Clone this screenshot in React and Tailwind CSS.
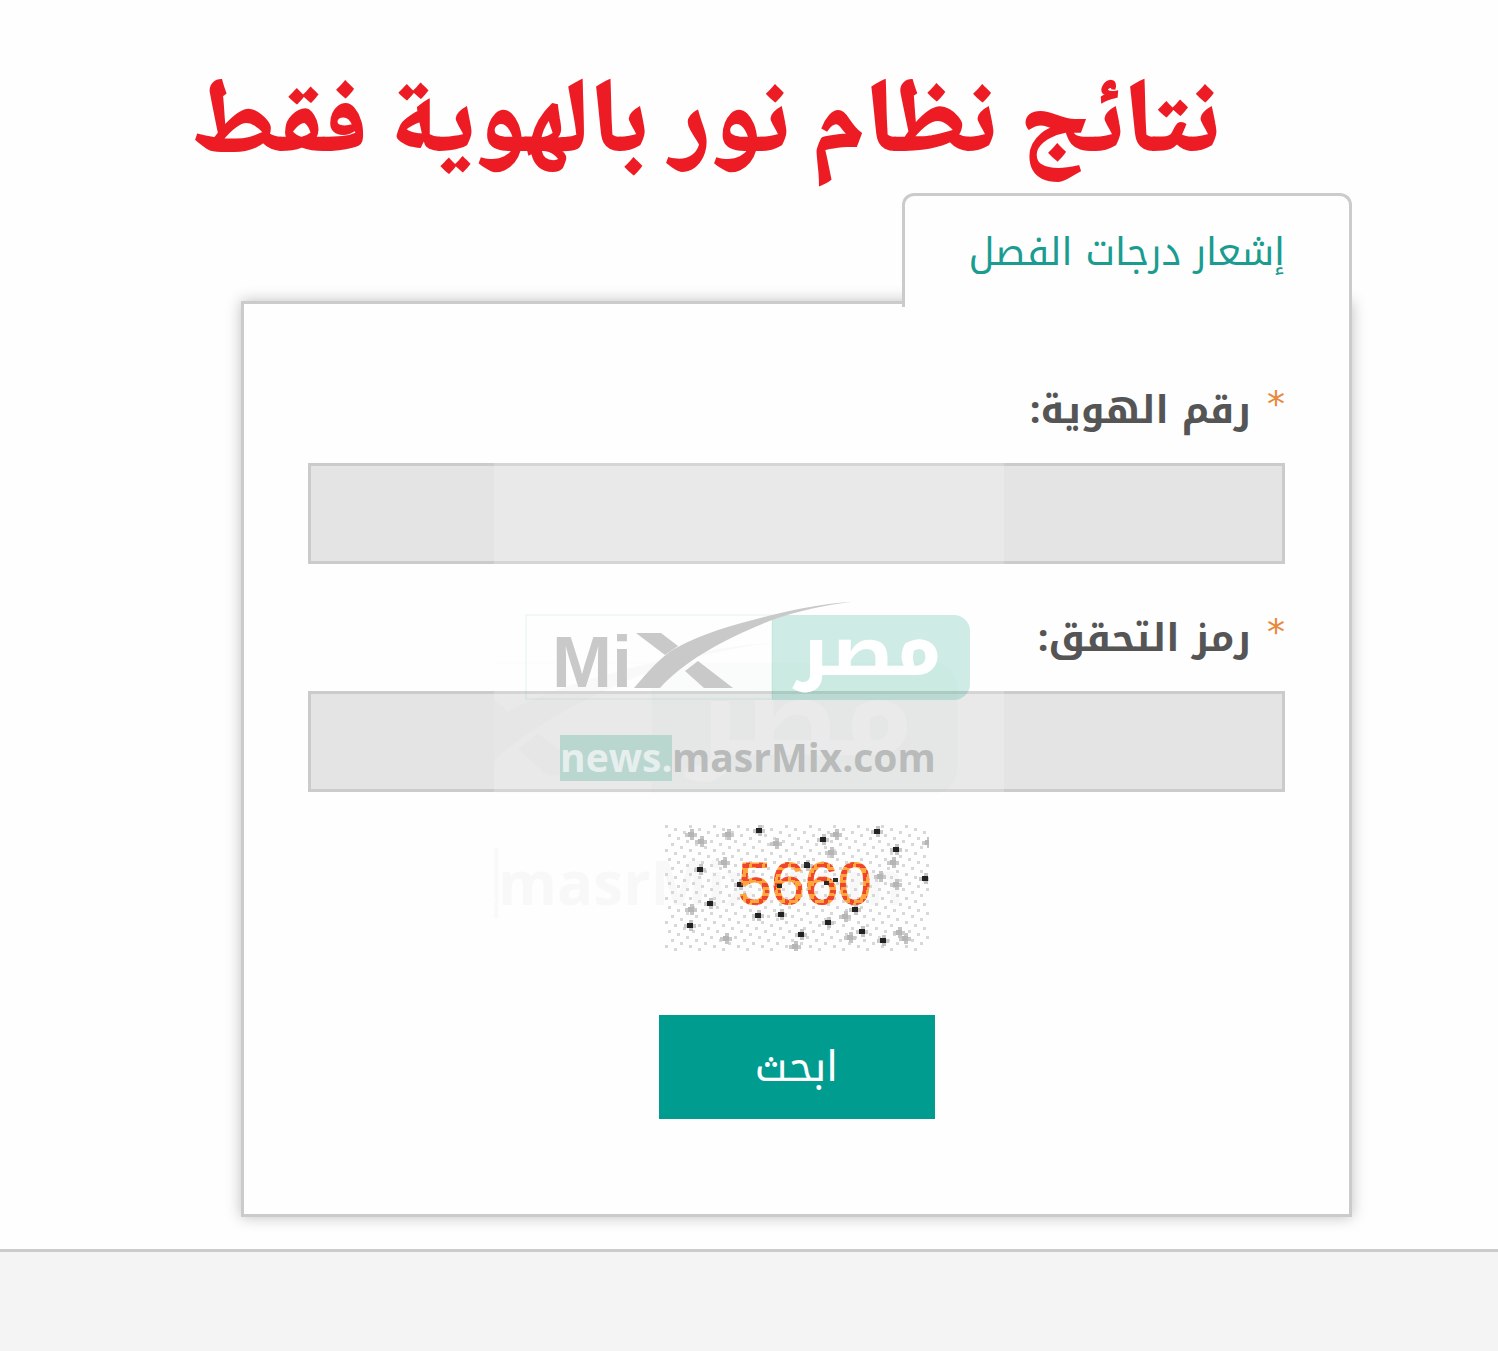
// [x, y, dark] noise specks on the captcha picture
const SPECKS = [
  [93, 4, 1], [211, 5, 1], [157, 13, 1], [170, 8, 0], [165, 26, 0], [230, 23, 1],
  [35, 15, 0], [62, 8, 0], [110, 17, 0], [25, 8, 0], [58, 36, 0], [34, 43, 1],
  [74, 58, 1], [44, 77, 1], [141, 39, 1], [92, 89, 1], [115, 88, 1], [24, 99, 1],
  [25, 83, 0], [60, 112, 0], [135, 108, 1], [162, 96, 1], [189, 83, 1], [196, 105, 1],
  [184, 111, 0], [217, 114, 1], [239, 112, 0], [233, 106, 0], [259, 52, 1], [230, 58, 0],
  [214, 50, 0], [262, 16, 0], [227, 36, 0], [129, 120, 0], [179, 90, 0],
]

const OVER_SPECKS = [[114, 61], [170, 55], [161, 58], [141, 39]]

const DOT_ROWS = [0, 1, 2, 3, 4, 5, 6, 7]

const FIELDS = [
  { id: 'identity', label: 'رقم الهوية:' },
  { id: 'code', label: 'رمز التحقق:' },
]

function Captcha() {
  return (
    <svg viewBox="0 0 264 126" className="relative z-10 h-[126px] w-[264px] [direction:ltr]" role="img" aria-label="5660">
      <defs>
        <pattern id="dots" width="24" height="24" patternUnits="userSpaceOnUse">
          {DOT_ROWS.map((row) => (
            <rect key={row} x={((row * 3) % 8) * 3} y={row * 3} width="3" height="3" fill="#d8d8d8" />
          ))}
        </pattern>
        <pattern id="ink" width="13" height="13" patternUnits="userSpaceOnUse">
          <rect width="13" height="13" fill="#ffa63a" />
          <path d="M0 0h6v4h-6zM6 6h7v4h-7zM3 9h4v4h-4zM9 0h4v3h-4z" fill="#f0442c" />
        </pattern>
      </defs>
      <rect width="264" height="126" fill="url(#dots)" />
      {SPECKS.map(([x, y, dark]) => (
        <g key={`${x}-${y}`} fill={dark ? '#222' : '#b5b5b5'}>
          <rect x={x - 5} y={y} width="12" height="4" fill="#c9c9c9" />
          <rect x={x} y={y - 4} width="4" height="11" fill="#c4c4c4" />
          <rect x={x - 2} y={y - 1} width="6" height="5" />
        </g>
      ))}
      <text x="73" y="79" fontSize="60" fontFamily="Liberation Sans, sans-serif" fill="url(#ink)" stroke="url(#ink)">5660</text>
      {OVER_SPECKS.map(([x, y]) => (
        <rect key={`${x}-${y}`} x={x - 2} y={y - 2} width="5" height="4" fill="#2a2a2a" />
      ))}
    </svg>
  )
}

function Brand() {
  return (
    <>
      <rect x="32" y="194" width="246" height="84" fill="none" stroke="#0fa37f" strokeOpacity="0.12" />
      <path d="M278 194H460a16 16 0 0 1 16 16V263a16 16 0 0 1 -16 16H278z" fill="#10a682" fillOpacity="0.2" />
      <text x="138" y="266" fontSize="72" fontWeight="700" textAnchor="end" fontFamily="Liberation Sans, sans-serif" fill="#c9c9c9">Mi</text>
      <g fill="#c9c9c9">
        <path d="M142 212H167L184 225L171 234z" />
        <path d="M204 240L239 267H210L191 250z" />
        <path d="M140 267C155 250 166 236 182 227C211 211 246 202 278 194C310 186 336 182 358 181C330 184 304 190 278 199C230 218 190 240 166 267z" />
      </g>
      <text x="374" y="254" fontSize="70" fontWeight="800" textAnchor="middle" fontFamily="Noto Kufi Arabic, DejaVu Sans, sans-serif" fill="#fff">مصر</text>
      <rect x="66" y="314" width="112" height="46" fill="#b9d6cf" />
      <text x="66" y="351" fontSize="39" fontWeight="700" fontFamily="Open Sans, sans-serif" fill="#e6efed">news.</text>
      <text x="178" y="351" fontSize="39" fontWeight="700" fontFamily="Open Sans, sans-serif" fill="#b8bbba">masrMix.com</text>
    </>
  )
}

function Watermark() {
  return (
    <div className="pointer-events-none absolute inset-0 flex items-center justify-center">
      <svg viewBox="0 0 510 510" className="h-[510px] w-[510px] [direction:ltr]" aria-hidden="true">
        <rect width="510" height="510" fill="#fff" fillOpacity="0.2" />
        <g transform="translate(-270 -57) scale(1.54)" opacity="0.08">
          <Brand />
        </g>
        <Brand />
      </svg>
    </div>
  )
}

function Field({ id, label }) {
  return (
    <div className="flex flex-col gap-[21px]">
      <label htmlFor={id} className="flex h-16 items-start gap-4 text-[38px] leading-[64px] font-bold text-[#555]">
        <span className="font-['DejaVu_Sans',sans-serif] text-[36px] leading-[52px] font-normal text-[#e8893c]">*</span>
        {label}
      </label>
      <input id={id} type="text" className="h-[101px] w-full border-[3px] border-[#cbcbcb] bg-[#e4e4e4] px-6 text-4xl text-[#555] outline-none" />
    </div>
  )
}

export default function App() {
  return (
    <div dir="rtl" className="relative flex min-h-screen flex-col bg-[#fefefe] font-['Noto_Kufi_Arabic','DejaVu_Sans',sans-serif]">
      <header className="flex h-[193px] items-end justify-center pr-[86px]">
        <h1 className="font-['Noto_Naskh_Arabic','DejaVu_Sans',serif] text-[104px] leading-[128px] font-bold whitespace-nowrap text-[#ed1c24] [-webkit-text-stroke:2px_#ed1c24]">
          نتائج نظام نور بالهوية فقط
        </h1>
      </header>

      <main className="flex flex-col pr-[146px] pb-8 pl-[241px]">
        {/* Tab sits over the top edge of the card */}
        <nav className="relative z-10 -mb-[6px] flex h-[114px] w-[450px] items-start rounded-t-xl border-[3px] border-b-0 border-[#cbcbcb] bg-[#fefefe] px-16">
          <a href="#grades" className="pt-6 text-[38px] leading-[64px] whitespace-nowrap text-[#1a9c90]">إشعار درجات الفصل</a>
        </nav>

        <form className="border-[3px] border-[#cbcbcb] bg-[#fefefe] px-16 pt-[74px] pb-[95px] shadow-[0_0_14px_rgba(0,0,0,0.25)]">
          <div className="flex flex-col gap-[42px]">
            {FIELDS.map((f) => (
              <Field key={f.id} id={f.id} label={f.label} />
            ))}
          </div>
          <div className="mt-[33px] flex flex-col items-center gap-16">
            <Captcha />
            <button type="button" className="h-[104px] w-[276px] bg-[#009c8f] text-[42px] leading-[64px] text-white">ابحث</button>
          </div>
        </form>
      </main>

      <footer className="flex-1 border-t-[3px] border-[#cbcbcb] bg-[#f4f4f4]" />
      <Watermark />
    </div>
  )
}
